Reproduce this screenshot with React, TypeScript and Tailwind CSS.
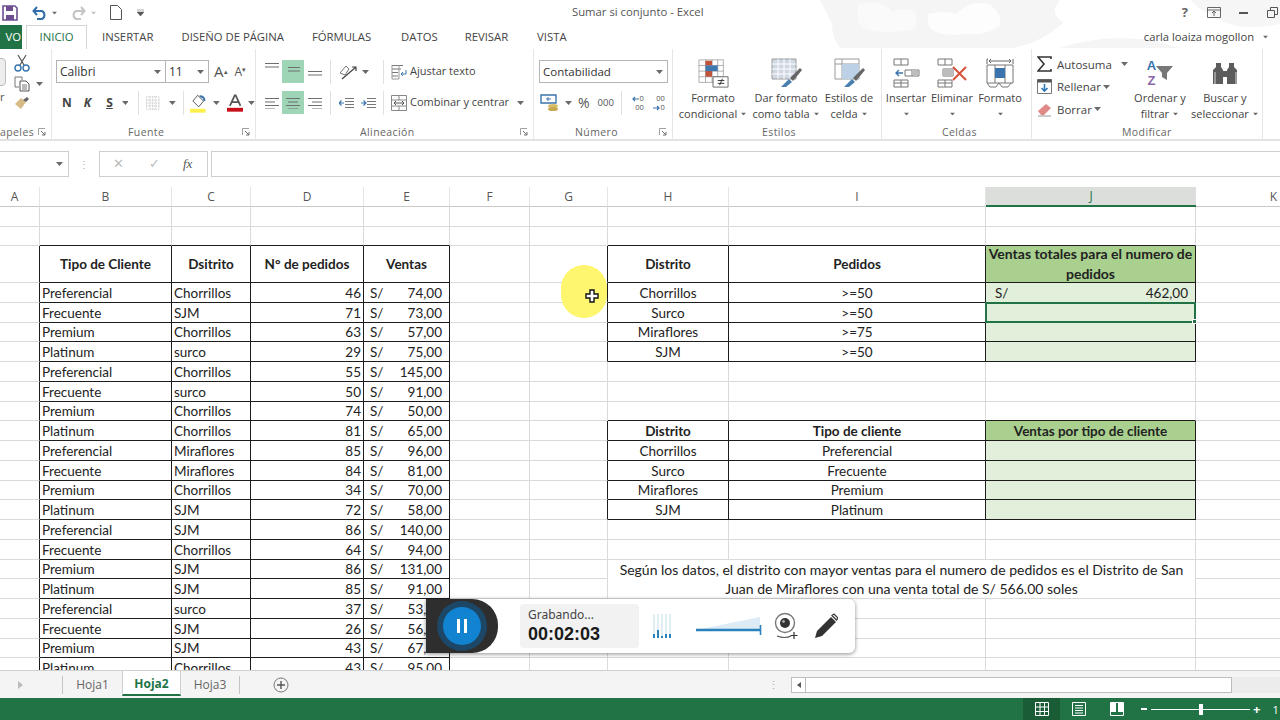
const SEGOE = "font-['Open_Sans','Noto_Sans',sans-serif]";

const leftRows = [
  ["Preferencial", "Chorrillos", "46", "74,00"],
  ["Frecuente", "SJM", "71", "73,00"],
  ["Premium", "Chorrillos", "63", "57,00"],
  ["Platinum", "surco", "29", "75,00"],
  ["Preferencial", "Chorrillos", "55", "145,00"],
  ["Frecuente", "surco", "50", "91,00"],
  ["Premium", "Chorrillos", "74", "50,00"],
  ["Platinum", "Chorrillos", "81", "65,00"],
  ["Preferencial", "Miraflores", "85", "96,00"],
  ["Frecuente", "Miraflores", "84", "81,00"],
  ["Premium", "Chorrillos", "34", "70,00"],
  ["Platinum", "SJM", "72", "58,00"],
  ["Preferencial", "SJM", "86", "140,00"],
  ["Frecuente", "Chorrillos", "64", "94,00"],
  ["Premium", "SJM", "86", "131,00"],
  ["Platinum", "SJM", "85", "91,00"],
  ["Preferencial", "surco", "37", "53,00"],
  ["Frecuente", "SJM", "26", "56,00"],
  ["Premium", "SJM", "43", "67,00"],
  ["Platinum", "Chorrillos", "43", "95,00"],
];

const topRight = [
  ["Chorrillos", ">=50"],
  ["Surco", ">=50"],
  ["Miraflores", ">=75"],
  ["SJM", ">=50"],
];
const lowRight = [
  ["Chorrillos", "Preferencial"],
  ["Surco", "Frecuente"],
  ["Miraflores", "Premium"],
  ["SJM", "Platinum"],
];

const COLS = ["A", "B", "C", "D", "E", "F", "G", "H", "I", "J", "K"];

// table areas, in sheet rows and column indexes
function inTable(r: number, c: number) {
  if (c >= 1 && c <= 4 && r >= 3) return true;
  if (c >= 7 && c <= 9 && r >= 3 && r <= 7) return true;
  if (c >= 7 && c <= 9 && r >= 11 && r <= 15) return true;
  return false;
}

function Caret({ className = "" }: { className?: string }) {
  return (
    <svg width="7" height="4" viewBox="0 0 7 4" className={className}>
      <path d="M0 0h7L3.5 4z" fill="#6a6a6a" />
    </svg>
  );
}

function Launcher() {
  return (
    <svg width="8" height="8" viewBox="0 0 8 8" className="shrink-0">
      <path d="M.5 7V.5H7" fill="none" stroke="#a0a0a0" />
      <path d="M3 3l4 4M7 4v3H4" fill="none" stroke="#707070" />
    </svg>
  );
}

function Sep({ h = "h-[24px]" }: { h?: string }) {
  return <div className={`w-px bg-[#e1e1e1] ${h}`} />;
}

function Lines({ rows }: { rows: [number, number][] }) {
  return (
    <svg width="16" height="12" viewBox="0 0 16 12">
      {rows.map(([x, w], i) => (
        <path key={i} d={`M${x} ${i * 3.5 + 1.5}h${w}`} stroke="#6f6f6f" strokeWidth="1" />
      ))}
    </svg>
  );
}

function Cell({ r, c }: { r: number; c: number }) {
  const right = inTable(r, c) || inTable(r, c + 1) ? "border-r-[#1c1c1c]" : "border-r-[#dadada]";
  const bottom = inTable(r, c) || inTable(r + 1, c) ? "border-b-[#1c1c1c]" : "border-b-[#dadada]";
  let bg = "bg-white";
  let cls = "";
  let body: React.ReactNode = null;

  if (c >= 1 && c <= 4 && r === 3) {
    cls = "justify-center font-bold";
    body = ["Tipo de Cliente", "Dsitrito", "N° de pedidos", "Ventas"][c - 1];
  }
  if (c >= 1 && c <= 4 && r > 3) {
    const row = leftRows[r - 4];
    if (c === 1 || c === 2) {
      cls = "pl-[2px]";
      body = row[c - 1];
    }
    if (c === 3) {
      cls = "justify-end pr-[2px]";
      body = row[2];
    }
    if (c === 4) {
      cls = "justify-between pl-[6px] pr-[7px]";
      body = (
        <>
          <span>S/</span>
          <span>{row[3]}</span>
        </>
      );
    }
  }
  if (r === 3 && c >= 7 && c <= 9) {
    cls = "justify-center font-bold text-center";
    body = ["Distrito", "Pedidos", "Ventas totales para el numero de pedidos"][c - 7];
    if (c === 9) {
      bg = "bg-[#a9d08e]";
      cls += " text-[14px] leading-[20px]";
    }
  }
  if (r >= 4 && r <= 7 && c >= 7 && c <= 9) {
    cls = "justify-center";
    if (c < 9) body = topRight[r - 4][c - 7];
    else bg = "bg-[#e2efda]";
  }
  if (r === 4 && c === 9) {
    cls = "justify-between pl-[9px] pr-[7px]";
    body = (
      <>
        <span>S/</span>
        <span>462,00</span>
      </>
    );
  }
  if (r === 11 && c >= 7 && c <= 9) {
    cls = "justify-center font-bold";
    body = ["Distrito", "Tipo de cliente", "Ventas por tipo de cliente"][c - 7];
    if (c === 9) bg = "bg-[#a9d08e]";
  }
  if (r >= 12 && r <= 15 && c >= 7 && c <= 9) {
    cls = "justify-center";
    if (c < 9) body = lowRight[r - 12][c - 7];
    else bg = "bg-[#e2efda]";
  }

  const wrap = r === 3 && c === 9 ? "whitespace-normal" : "whitespace-nowrap pt-[1px]";
  return <div className={`relative flex items-center overflow-hidden border-r border-b ${wrap} ${right} ${bottom} ${bg} ${cls}`}>{body}</div>;
}

function Sheet() {
  const cells: React.ReactNode[] = [];
  for (let r = 1; r <= 23; r++) {
    for (let c = 0; c < COLS.length; c++) {
      if (r === 18 && c === 7) {
        cells.push(
          <div key="note" className="col-span-3 row-span-2 flex items-center justify-center border-r border-b border-r-[#dadada] border-b-[#dadada] bg-white pt-[1px] text-center text-[14px] leading-[19.75px]">
            <span>
              Según los datos, el distrito con mayor ventas para el numero de pedidos es el Distrito de San
              <br />
              Juan de Miraflores con una venta total de S/ 566.00 soles
            </span>
          </div>,
        );
        continue;
      }
      if ((r === 18 || r === 19) && c >= 7 && c <= 9) continue;
      cells.push(<Cell key={`${r}-${c}`} r={r} c={c} />);
    }
  }

  return (
    <div className="relative h-[483px] overflow-hidden bg-white">
      <div className="-ml-[10px] grid w-[1362px] grid-cols-[50px_132px_79px_113px_86px_80px_78px_121px_257px_210px_156px] grid-rows-[20px_19.5px_19.5px_37px_repeat(20,19.75px)] font-['Lato',sans-serif] text-[13.5px] text-[#222]">
        {COLS.map((name) => (
          <div
            key={name}
            className={`flex items-center justify-center border-b text-[12px] ${SEGOE} ${
              name === "J"
                ? "border-b-2 border-b-[#217346] bg-[#dcdedc] text-[#217346]"
                : "border-r border-r-[#e4e4e4] border-b-[#c8c8c8] bg-white text-[#555]"
            }`}
          >
            {name}
          </div>
        ))}
        {cells}
      </div>

      {/* selected cell J5 */}
      <div className="pointer-events-none absolute top-[115px] left-[985px] h-[21px] w-[211px] border-2 border-[#217346]">
        <div className="absolute -right-[3px] -bottom-[3px] h-[5px] w-[5px] border border-white bg-[#217346]" />
      </div>

      {/* pointer highlight */}
      <div className="absolute top-[78px] left-[561px] h-[53px] w-[46px] rounded-full bg-[#fdf66e]" />
      <svg width="14" height="14" viewBox="0 0 14 14" className="absolute top-[102px] left-[585px]">
        <path d="M5 1h4v4h4v4H9v4H5V9H1V5h4z" fill="#fff" stroke="#111" strokeWidth="1.4" />
      </svg>

      <Recorder />
    </div>
  );
}

function Recorder() {
  return (
    <div className="absolute top-[412px] left-[426px] flex h-[54px] w-[429px] items-center rounded-r-[6px] bg-white font-['Noto_Sans',sans-serif] shadow-[0_1px_4px_rgba(0,0,0,0.45)]">
      <div className="flex h-full w-[72px] items-center justify-center rounded-r-[26px] bg-[#2e2e2e]">
        <div className="flex h-[50px] w-[50px] items-center justify-center rounded-full bg-[#1d4766]">
          <div className="flex h-[38px] w-[38px] items-center justify-center gap-[4px] rounded-full bg-[#1283d0]">
            <div className="h-[14px] w-[3px] bg-white" />
            <div className="h-[14px] w-[3px] bg-white" />
          </div>
        </div>
      </div>
      <div className="ml-[22px] flex h-[44px] w-[119px] flex-col justify-center rounded-[4px] bg-[#f2f2f2] pl-[8px]">
        <div className="text-[12px] leading-[15px] text-[#444]">Grabando...</div>
        <div className="font-['Liberation_Sans',sans-serif] text-[18px] leading-[24px] font-bold text-[#1a1a1a]">00:02:03</div>
      </div>
      <svg width="20" height="26" viewBox="0 0 20 26" className="ml-[14px]">
        {[1, 5, 9, 13, 17].map((x) => (
          <path key={x} d={`M${x} 1v24`} stroke="#d5e5f1" strokeWidth="1.4" />
        ))}
        <path d="M1 21v4M5 17v8M9 23v2M13 21v4M17 21v4" stroke="#2a82bd" strokeWidth="2" />
      </svg>
      <svg width="68" height="20" viewBox="0 0 68 20" className="ml-[22px]">
        <path d="M1 14L65 1v12z" fill="#dcebf6" />
        <path d="M1 14h64" stroke="#2a82bd" strokeWidth="2.4" />
        <path d="M65.5 9v10" stroke="#2a82bd" strokeWidth="1.6" />
      </svg>
      <svg width="26" height="28" viewBox="0 0 26 28" className="ml-[10px]">
        <circle cx="12" cy="11" r="9.5" fill="#fff" stroke="#777" strokeWidth="1.4" />
        <circle cx="12" cy="11" r="5" fill="#333" />
        <circle cx="10.5" cy="9.5" r="1.4" fill="#aaa" />
        <path d="M4 24q8 3 14 0" fill="none" stroke="#555" strokeWidth="1.2" />
        <path d="M21 20v7M17.500 23.500h7" stroke="#333" strokeWidth="1.2" />
      </svg>
      <svg width="24" height="26" viewBox="0 0 24 26" className="ml-[15px]">
        <path d="M1 25l2-7L17 4l5 5L8 23z" fill="#333" />
        <path d="M18 2.500l2-1.500 4 4-1.500 2z" fill="#fff" stroke="#333" strokeWidth="1.2" />
      </svg>
    </div>
  );
}

function BigButton({ w, ml, l1, l2, icon }: { w: string; ml: string; l1: string; l2?: string; icon: React.ReactNode }) {
  return (
    <div className={`flex flex-col items-center ${w} ${ml}`}>
      <div className="flex h-[34px] items-center">{icon}</div>
      <div className="text-center text-[11px] leading-[16px] whitespace-nowrap text-[#444]">{l1}</div>
      <div className="flex h-[16px] items-center justify-center gap-[3px] text-[11px] leading-[16px] whitespace-nowrap text-[#444]">
        {l2}
        <Caret className="scale-75" />
      </div>
    </div>
  );
}

function GroupLabel({ text, className }: { text: string; className: string }) {
  return <div className={`absolute bottom-0 text-[10.5px] leading-[14px] tracking-[0.4px] text-[#666] ${className}`}>{text}</div>;
}

function GridIcon() {
  return (
    <svg width="31" height="30" viewBox="0 0 33 30">
      <path d="M1 1h26v24H1zM1 7h26M1 13h26M1 19h26M8 1v24M15 1v24M21 1v24" fill="#fff" stroke="#9a9a9a" strokeWidth="0.8" />
      <path d="M8 2h7v5H8zM8 13h7v6H8z" fill="#c0533a" />
      <path d="M8 7h13v6H8z" fill="#4079b0" />
      <path d="M16 19h16v11H16z" fill="#fff" stroke="#666" />
      <path d="M21 23h7M21 26h7M26 21l-3 7" stroke="#333" fill="none" />
    </svg>
  );
}

function Ribbon() {
  return (
    <div className="relative flex h-[92px] border-b-2 border-b-[#e2e2e2] bg-white">
      {/* Portapapeles */}
      <div className="relative flex w-[52px] shrink-0 border-r border-r-[#e6e6e6]">
        <div className="absolute top-[9px] left-[-4px] h-[28px] w-[10px] rounded-sm border border-[#bdbdbd] bg-[#eee]" />
        <div className="absolute top-[40px] left-0 text-[11px] text-[#555]">r</div>
        <div className="ml-[14px] flex flex-col items-start gap-[4px] pt-[5px]">
          <svg width="16" height="18" viewBox="0 0 16 18">
            <path d="M4 1l6 10M12 1L6 11" stroke="#555" strokeWidth="1.2" />
            <circle cx="4" cy="14" r="3" fill="none" stroke="#3a74ad" strokeWidth="1.4" />
            <circle cx="12" cy="14" r="3" fill="none" stroke="#3a74ad" strokeWidth="1.4" />
          </svg>
          <div className="flex items-center gap-[6px]">
            <svg width="16" height="16" viewBox="0 0 16 16">
              <path d="M1 1h7v3M1 1v10h4" fill="none" stroke="#777" />
              <path d="M6 5h6l3 3v7H6z" fill="#fff" stroke="#555" />
              <path d="M8 9h5M8 11h5M8 13h5" stroke="#777" />
            </svg>
            <Caret />
          </div>
          <svg width="16" height="14" viewBox="0 0 16 14">
            <path d="M1 8l6-6 5 4-5 7z" fill="#d6bb84" />
            <path d="M9 4l4-3 2 2-3 3z" fill="#666" />
          </svg>
        </div>
        <GroupLabel text="apeles" className="left-0" />
        <div className="absolute right-[5px] bottom-[3px]">
          <Launcher />
        </div>
      </div>

      {/* Fuente */}
      <div className="relative w-[204px] shrink-0 border-r border-r-[#e6e6e6] pt-[11px] pl-[4px]">
        <div className="flex items-center">
          <div className="flex h-[23px] w-[110px] items-center justify-between border border-[#b4b4b4] pr-[4px] pl-[3px] text-[12px] text-[#333]">
            Calibri
            <Caret />
          </div>
          <div className="flex h-[23px] w-[43px] items-center justify-between border border-l-0 border-[#b4b4b4] pr-[4px] pl-[3px] text-[12px] text-[#333]">
            11
            <Caret />
          </div>
          <div className="ml-[5px] text-[15px] leading-none text-[#555]">
            A<sup className="text-[7px]">▴</sup>
          </div>
          <div className="ml-[7px] text-[12px] leading-none text-[#555]">
            A<sup className="text-[7px]">▾</sup>
          </div>
        </div>
        <div className="mt-[8px] flex h-[24px] items-center pl-[6px] text-[#444]">
          <span className="text-[12px] font-bold">N</span>
          <span className="ml-[12px] text-[12px] font-bold italic">K</span>
          <span className="ml-[15px] text-[12px] font-bold underline">S</span>
          <Caret className="ml-[9px]" />
          <div className="ml-[10px]"><Sep /></div>
          <svg width="14" height="14" viewBox="0 0 14 14" className="ml-[7px]">
            <path d="M.5.500h13v13H.5zM.5 7h13M7 .5v13M4 .5v13M10 .5v13M.5 4h13M.5 10h13" fill="none" stroke="#b5b5b5" strokeWidth="0.8" strokeDasharray="1 1" />
          </svg>
          <Caret className="ml-[9px]" />
          <div className="ml-[7px]"><Sep /></div>
          <svg width="18" height="20" viewBox="0 0 18 20" className="ml-[6px]">
            <path d="M3 8l5-6 6 6-5 6z" fill="#fff" stroke="#555" />
            <path d="M10 3q5 0 5 5" fill="none" stroke="#3a74ad" strokeWidth="2" />
            <path d="M0 16h16v4H0z" fill="#fdf04a" />
          </svg>
          <Caret className="ml-[6px]" />
          <svg width="17" height="18" viewBox="0 0 17 18" className="ml-[7px]">
            <path d="M3 12L8 1h1l5 11M5 8h7" fill="none" stroke="#555" strokeWidth="1.8" />
            <path d="M0 14h17v4H0z" fill="#c8101a" />
          </svg>
          <Caret className="ml-[5px]" />
        </div>
        <GroupLabel text="Fuente" className="left-[76px]" />
        <div className="absolute right-[5px] bottom-[3px]">
          <Launcher />
        </div>
      </div>

      {/* Alineación */}
      <div className="relative w-[278px] shrink-0 border-r border-r-[#e6e6e6] pt-[11px] pl-[5px]">
        <div className="flex h-[23px] items-center">
          <div className="mb-[8px] flex w-[21px] justify-center"><Lines rows={[[1, 14], [1, 14]]} /></div>
          <div className="flex h-[23px] w-[22px] items-center justify-center bg-[#9fd5b7]"><Lines rows={[[3, 12], [3, 12]]} /></div>
          <div className="mt-[8px] flex w-[21px] justify-center"><Lines rows={[[1, 14], [1, 14]]} /></div>
          <div className="ml-[5px]"><Sep /></div>
          <svg width="18" height="16" viewBox="0 0 18 16" className="ml-[8px]">
            <path d="M1 9l6-7 3 3-4 6z" fill="none" stroke="#777" />
            <path d="M3 15L17 3M13 3h4v4" fill="none" stroke="#444" strokeWidth="1.2" />
          </svg>
          <Caret className="ml-[5px]" />
          <div className="ml-[14px]"><Sep /></div>
          <svg width="16" height="16" viewBox="0 0 16 16" className="ml-[7px]">
            <path d="M1 1.500h11M1 5h9M1 8.500h6M1 12h6" stroke="#777" />
            <path d="M1 1v14h7V1" fill="none" stroke="#999" />
            <path d="M15 6v4h-5M12 8l-2 2 2 2" fill="none" stroke="#3a74ad" />
          </svg>
          <div className="ml-[3px] text-[11px] whitespace-nowrap text-[#444]">Ajustar texto</div>
        </div>
        <div className="mt-[8px] flex h-[23px] items-center">
          <div className="flex w-[21px] justify-center"><Lines rows={[[1, 14], [1, 10], [1, 14], [1, 10]]} /></div>
          <div className="flex h-[23px] w-[22px] items-center justify-center bg-[#9fd5b7]"><Lines rows={[[1, 14], [3, 10], [1, 14], [3, 10]]} /></div>
          <div className="flex w-[21px] justify-center"><Lines rows={[[1, 14], [5, 10], [1, 14], [5, 10]]} /></div>
          <div className="ml-[5px]"><Sep /></div>
          <svg width="16" height="12" viewBox="0 0 16 12" className="ml-[8px]">
            <path d="M6 1.500h9M6 4.500h9M6 7.500h9M6 10.500h9" stroke="#777" />
            <path d="M5 6H0M2.500 3.500L0 6l2.500 2.500" fill="none" stroke="#3a74ad" strokeWidth="1.2" />
          </svg>
          <svg width="16" height="12" viewBox="0 0 16 12" className="ml-[6px]">
            <path d="M6 1.500h9M6 4.500h9M6 7.500h9M6 10.500h9" stroke="#777" />
            <path d="M0 6h5M2.500 3.500L5 6 2.500 8.500" fill="none" stroke="#3a74ad" strokeWidth="1.2" />
          </svg>
          <div className="ml-[6px]"><Sep /></div>
          <svg width="16" height="16" viewBox="0 0 16 16" className="ml-[7px]">
            <path d="M.5.500h15v15H.5zM.5 5h15M.5 11h15M8 .5V5M8 11v4.500" fill="none" stroke="#888" />
            <path d="M3 8h10M3 8l2-2M3 8l2 2M13 8l-2-2M13 8l-2 2" fill="none" stroke="#555" />
          </svg>
          <div className="ml-[3px] text-[11px] whitespace-nowrap text-[#444]">Combinar y centrar</div>
          <Caret className="ml-[8px]" />
        </div>
        <GroupLabel text="Alineación" className="left-[104px]" />
        <div className="absolute right-[5px] bottom-[3px]">
          <Launcher />
        </div>
      </div>

      {/* Número */}
      <div className="relative w-[139px] shrink-0 border-r border-r-[#e6e6e6] pt-[11px] pl-[5px]">
        <div className="flex h-[23px] w-[129px] items-center justify-between border border-[#b4b4b4] pr-[4px] pl-[3px] text-[11.5px] text-[#333]">
          Contabilidad
          <Caret />
        </div>
        <div className="mt-[8px] flex h-[24px] items-center pl-[1px] text-[#555]">
          <svg width="20" height="18" viewBox="0 0 20 18">
            <path d="M1 1h15v8H1z" fill="#fff" stroke="#3a74ad" strokeWidth="1.4" />
            <path d="M8 3v4M6 5h5" stroke="#3a74ad" />
            <ellipse cx="13" cy="12" rx="5" ry="2" fill="#d8bd6a" />
            <ellipse cx="13" cy="15" rx="5" ry="2" fill="#c9a94f" />
          </svg>
          <Caret className="ml-[5px]" />
          <span className="ml-[6px] text-[14px] leading-none">%</span>
          <span className="ml-[8px] text-[9.5px] leading-none">000</span>
          <div className="ml-[7px]"><Sep /></div>
          <div className="ml-[7px] w-[15px] text-[7.5px] leading-[9px] text-[#555]">
            <div className="flex items-center justify-end">
              <svg width="7" height="6" viewBox="0 0 7 6" className="mr-[1px]">
                <path d="M7 3H1M3 1L1 3l2 2" fill="none" stroke="#3a74ad" strokeWidth="1.2" />
              </svg>
              0
            </div>
            <div className="text-right">00</div>
          </div>
          <div className="ml-[6px] w-[15px] text-[7.5px] leading-[9px] text-[#555]">
            <div className="text-right">00</div>
            <div className="flex items-center justify-end">
              <svg width="7" height="6" viewBox="0 0 7 6" className="mr-[1px]">
                <path d="M0 3h6M4 1l2 2-2 2" fill="none" stroke="#3a74ad" strokeWidth="1.2" />
              </svg>
              0
            </div>
          </div>
        </div>
        <GroupLabel text="Número" className="left-[41px]" />
        <div className="absolute right-[5px] bottom-[3px]">
          <Launcher />
        </div>
      </div>

      {/* Estilos */}
      <div className="relative flex w-[209px] shrink-0 border-r border-r-[#e6e6e6] pt-[7px]">
        <BigButton w="w-[70px]" ml="ml-[5px]" l1="Formato" l2="condicional" icon={<GridIcon />} />
        <BigButton
          w="w-[68px]"
          ml="ml-[4px]"
          l1="Dar formato"
          l2="como tabla"
          icon={
            <svg width="31" height="30" viewBox="0 0 31 30">
              <path d="M1 1h24v20H1z" fill="#cfd8e3" stroke="#999" />
              <path d="M1 6h24M1 11h24M1 16h24M7 1v20M13 1v20M19 1v20" stroke="#fff" />
              <path d="M10 29l8-8 3 3-6 5z" fill="#4a7fb0" />
              <path d="M19 20l10-10 2 2-9 11z" fill="#666" />
            </svg>
          }
        />
        <BigButton
          w="w-[62px]"
          ml="-ml-[2px]"
          l1="Estilos de"
          l2="celda"
          icon={
            <svg width="31" height="30" viewBox="0 0 31 30">
              <path d="M1 1h24v20H1z" fill="#fff" stroke="#999" />
              <path d="M1 6h24M8 1v20" stroke="#999" />
              <path d="M8 6h17v15H8z" fill="#bcd0e6" />
              <path d="M10 29l8-8 3 3-6 5z" fill="#4a7fb0" />
              <path d="M19 20l10-10 2 2-9 11z" fill="#666" />
            </svg>
          }
        />
        <GroupLabel text="Estilos" className="left-[89px]" />
      </div>

      {/* Celdas */}
      <div className="relative flex w-[150px] shrink-0 border-r border-r-[#e6e6e6] pt-[7px] text-[#444]">
        <BigButton
          w="w-[46px]"
          ml="ml-[1px]"
          l1="Insertar"
          icon={
            <svg width="27" height="30" viewBox="0 0 27 30">
              <path d="M1 1h14v6H1zM8 1v6M12 12h14v6H12zM19 12v6M1 22h14v7H1zM8 22v7M1 25h14" fill="#fff" stroke="#777" />
              <path d="M19 12h6v5h-6z" fill="#bdbdbd" />
              <path d="M3 15h7M6 12l-3 3 3 3" fill="none" stroke="#3a74ad" strokeWidth="1.4" />
            </svg>
          }
        />
        <BigButton
          w="w-[46px]"
          l1="Eliminar"
          ml="ml-[0px]"
          icon={
            <svg width="30" height="30" viewBox="0 0 30 30">
              <path d="M1 1h14v6H1zM8 1v6M1 22h14v7H1zM8 22v7M1 25h14M6 11h10v7H6z" fill="#fff" stroke="#777" />
              <path d="M6 11h10v7H6z" fill="#bdbdbd" />
              <path d="M16 9l13 13M29 9L16 22" stroke="#d5513a" strokeWidth="2" />
            </svg>
          }
        />
        <BigButton
          w="w-[50px]"
          l1="Formato"
          ml="ml-[0px]"
          icon={
            <svg width="28" height="30" viewBox="0 0 28 30">
              <path d="M1 1h1M1 1v5M27 1v5M3 3h22M3 3l2-2M3 3l2 2M25 3l-2-2M25 3l-2 2" fill="none" stroke="#666" />
              <path d="M1 7h26v18H1zM9 7v18M19 7v18" fill="#fff" stroke="#777" />
              <path d="M9 10h10v10H9z" fill="#3a74ad" />
              <path d="M1 25l3 4h6l3-4M13 25l3 4h6l3-4" fill="none" stroke="#777" />
            </svg>
          }
        />
        <GroupLabel text="Celdas" className="left-[60px]" />
      </div>

      {/* Modificar */}
      <div className="relative flex w-[231px] shrink-0 border-r border-r-[#e6e6e6]">
        <div className="ml-[5px] flex flex-col pt-[4px] text-[11.5px] text-[#444]">
          <div className="flex h-[22.5px] items-center">
            <svg width="15" height="16" viewBox="0 0 15 16">
              <path d="M14 3V1H1l6 7-6 7h13v-2" fill="none" stroke="#333" strokeWidth="1.6" />
            </svg>
            <span className="ml-[5px]">Autosuma</span>
            <Caret className="ml-[9px]" />
          </div>
          <div className="flex h-[22.5px] items-center">
            <svg width="15" height="15" viewBox="0 0 15 15">
              <path d="M.5.500h14v14H.5z" fill="#fff" stroke="#777" />
              <path d="M.5.500h14v3H.5z" fill="#555" />
              <path d="M7.500 5v7M4.500 9l3 3 3-3" fill="none" stroke="#2f76b5" strokeWidth="1.6" />
            </svg>
            <span className="ml-[5px]">Rellenar</span>
            <Caret className="ml-[2px]" />
          </div>
          <div className="flex h-[22.5px] items-center">
            <svg width="15" height="15" viewBox="0 0 15 15">
              <path d="M1 9l8-7 5 4-7 7H4z" fill="#e08a88" />
              <path d="M1 14h13" stroke="#999" />
            </svg>
            <span className="ml-[5px]">Borrar</span>
            <Caret className="ml-[2px]" />
          </div>
        </div>
        <BigButton
          w="w-[60px]"
          ml="ml-[2px] pt-[7px]"
          l1="Ordenar y"
          l2="filtrar"
          icon={
            <div className="flex items-center font-['Liberation_Sans',sans-serif] text-[13px] leading-[15px] font-bold">
              <div className="text-center">
                <div className="text-[#3a74ad]">A</div>
                <div className="text-[#8a66a8]">Z</div>
              </div>
              <svg width="17" height="16" viewBox="0 0 17 16">
                <path d="M0 1h17l-6 7v7l-5-3V8z" fill="#777" />
              </svg>
            </div>
          }
        />
        <BigButton
          w="w-[68px]"
          ml="ml-[1px] pt-[7px]"
          l1="Buscar y"
          l2="seleccionar"
          icon={
            <svg width="28" height="24" viewBox="0 0 28 24">
              <path d="M2 23V9l3-3V2h5v4l2 3v14zM16 23V9l2-3V2h5v4l3 3v14z" fill="#5c5c5c" />
              <path d="M12 10h4v6h-4z" fill="#5c5c5c" />
              <path d="M3 23V11h2v12zM24 23V11h2v12z" fill="#9a9a9a" />
            </svg>
          }
        />
        <GroupLabel text="Modificar" className="left-[90px]" />
      </div>
    </div>
  );
}

export default function App() {
  return (
    <div className={`relative h-[720px] w-[1280px] overflow-hidden bg-white ${SEGOE}`}>
      {/* faint title bar artwork */}
      <svg width="480" height="48" viewBox="0 0 480 48" className="absolute top-0 right-0">
        <path d="M20 0h240q-12 14 4 22-10 10-30 20l-20 6H40q-8-10-8-24z" fill="#f4f5f4" />
        <path d="M58 4q24-6 34 8 12-6 24 0v16q-10 4-30 4-28 0-28-14z" fill="#f9faf9" />
        <path d="M128 14q16-4 28 0 14-14 32-10 14 8 12 22-14 10-34 8-36 4-38-12z" fill="#fdfdfd" />
        <path d="M260 48q40-14 90-8l30 8z" fill="#f4f5f4" />
        <path d="M390 0h90v24q-40 8-60-4-18-8-30-20z" fill="#f5f6f5" />
      </svg>

      {/* title bar */}
      <div className="relative flex h-[25px] items-center">
        <svg width="16" height="16" viewBox="0 0 16 16" className="ml-[2px]">
          <path d="M1 1h12l2 2v12H1z" fill="#fff" stroke="#6d4f90" strokeWidth="1.6" />
          <path d="M4 1h7v5H4zM4 10h8v5H4z" fill="#6d4f90" />
        </svg>
        <svg width="16" height="14" viewBox="0 0 16 14" className="ml-[14px]">
          <path d="M2 5h8a4.500 4.500 0 0 1 0 8H5M5 1L1.500 5 5 9" fill="none" stroke="#2f6ea8" strokeWidth="2" />
        </svg>
        <Caret className="ml-[3px] scale-75" />
        <svg width="16" height="14" viewBox="0 0 16 14" className="ml-[12px]">
          <path d="M14 5H6a4.500 4.500 0 0 0 0 8h5M11 1l3.500 4L11 9" fill="none" stroke="#c4c4c4" strokeWidth="2" />
        </svg>
        <Caret className="ml-[4px] scale-75 opacity-40" />
        <svg width="12" height="15" viewBox="0 0 12 15" className="ml-[13px]">
          <path d="M.5.500h7l4 4v10H.5z" fill="#fff" stroke="#555" />
        </svg>
        <svg width="7" height="7" viewBox="0 0 7 7" className="ml-[15px]">
          <path d="M0 1h7M0 3h7L3.500 7z" fill="#555" stroke="#555" strokeWidth="0.5" />
        </svg>
        <div className="absolute left-[572px] text-[11.3px] whitespace-nowrap text-[#555]">Sumar si conjunto - Excel</div>
        <div className="ml-auto flex items-center pr-[2px]">
          <span className="text-[13px] font-bold text-[#666]">?</span>
          <svg width="14" height="11" viewBox="0 0 14 11" className="ml-[19px]">
            <path d="M.5.500h13v10H.5zM.5 3h13M7 9V4M5 6l2-2 2 2" fill="none" stroke="#666" />
          </svg>
          <div className="ml-[18px] h-[2px] w-[9px] bg-[#555]" />
          <svg width="11" height="11" viewBox="0 0 11 11" className="ml-[19px]">
            <path d="M.5 3.500h7v7h-7zM3.500 3.500V.5h7v7h-3" fill="none" stroke="#555" />
          </svg>
        </div>
      </div>

      {/* tabs */}
      <div className="relative flex h-[24px] items-center text-[11.3px] text-[#444]">
        <div className="flex h-[24px] w-[22px] items-center justify-end bg-[#217346] pr-[1px] text-white">VO</div>
        <div className="ml-[4px] flex h-[24px] w-[61px] items-center justify-center border border-b-0 border-[#d4d4d4] bg-white text-[#217346]">INICIO</div>
        <div className="ml-[15px]">INSERTAR</div>
        <div className="ml-[28px]">DISEÑO DE PÁGINA</div>
        <div className="ml-[28px]">FÓRMULAS</div>
        <div className="ml-[30px]">DATOS</div>
        <div className="ml-[27px]">REVISAR</div>
        <div className="ml-[29px]">VISTA</div>
        <div className="ml-auto flex items-center gap-[8px] pr-[11px] text-[11.2px]">
          carla loaiza mogollon
          <Caret className="scale-75" />
        </div>
      </div>

      <Ribbon />

      {/* formula bar */}
      <div className="mt-[10px] flex h-[26px] items-stretch">
        <div className="flex w-[69px] items-center justify-end border border-l-0 border-[#cfcfcf] pr-[5px]">
          <Caret />
        </div>
        <div className="flex w-[30px] items-center justify-center text-[10px] leading-[4px] text-[#aaa]">⋮</div>
        <div className="flex w-[109px] items-center border border-[#cfcfcf] text-[#bbb]">
          <span className="ml-[13px] text-[13px]">✕</span>
          <span className="ml-[25px] text-[13px]">✓</span>
          <span className="ml-[23px] font-['Liberation_Serif',serif] text-[13px] text-[#555] italic">fx</span>
        </div>
        <div className="ml-[3px] flex-1 border border-r-0 border-[#cfcfcf]" />
      </div>
      <div className="h-[10px]" />

      <Sheet />

      {/* sheet tabs */}
      <div className="flex h-[28px] items-center border-t border-t-[#cfcfcf] bg-[#f4f4f4] text-[12px] text-[#666]">
        <svg width="5" height="8" viewBox="0 0 5 8" className="ml-[18px]">
          <path d="M0 0l5 4-5 4z" fill="#bbb" />
        </svg>
        <div className="ml-[39px] h-[18px] w-px bg-[#c4c4c4]" />
        <div className="w-[59px] text-center">Hoja1</div>
        <div className="flex h-[25px] w-[59px] items-center justify-center self-start border-x border-b-2 border-x-[#cfcfcf] border-b-[#217346] bg-white pt-[2px] font-bold text-[#217346]">Hoja2</div>
        <div className="w-[58px] text-center">Hoja3</div>
        <div className="h-[18px] w-px bg-[#c4c4c4]" />
        <svg width="16" height="16" viewBox="0 0 16 16" className="ml-[33px]">
          <circle cx="8" cy="8" r="7" fill="none" stroke="#777" />
          <path d="M4 8h8M8 4v8" stroke="#555" strokeWidth="1.4" />
        </svg>
        <div className="ml-[479px] text-[11px] leading-none text-[#aaa]">⋮</div>
        <div className="ml-[12px] flex h-[16px] flex-1 items-stretch">
          <div className="flex w-[15px] items-center justify-center border border-[#bdbdbd] bg-white">
            <svg width="4" height="6" viewBox="0 0 4 6">
              <path d="M4 0L0 3l4 3z" fill="#555" />
            </svg>
          </div>
          <div className="w-[426px] border-y border-r border-[#bdbdbd] bg-white" />
          <div className="flex-1 bg-[#ececec]" />
        </div>
      </div>

      {/* status bar */}
      <div className="flex h-[22px] items-center bg-[#217346] text-white">
        <div className="ml-[1023px] flex h-full w-[37px] items-center justify-center bg-[#1a5c36]">
          <svg width="14" height="14" viewBox="0 0 14 14">
            <path d="M.5.500h13v13H.5zM.5 5h13M.5 9.500h13M5 .5v13M9.500 .5v13" fill="none" stroke="#fff" />
          </svg>
        </div>
        <svg width="14" height="14" viewBox="0 0 14 14" className="ml-[12px]">
          <path d="M.5.500h13v13H.5z" fill="none" stroke="#fff" />
          <path d="M3 3.500h8M3 6h8M3 8.500h8M3 11h8" stroke="#fff" />
        </svg>
        <svg width="14" height="14" viewBox="0 0 14 14" className="ml-[24px]">
          <path d="M.5.500h13v13H.5z" fill="none" stroke="#fff" />
          <path d="M1 1h5v9H1zM8 1h5v9H8z" fill="#fff" />
        </svg>
        <div className="ml-[17px] h-[2px] w-[6px] bg-white" />
        <div className="relative ml-[4px] h-px w-[99px] bg-white">
          <div className="absolute -top-[5px] left-[48px] h-[11px] w-[4px] bg-white" />
        </div>
        <div className="ml-[3px] text-[13px] leading-none font-bold">+</div>
        <div className="ml-[12px] text-[11px] leading-none">1</div>
      </div>
    </div>
  );
}
